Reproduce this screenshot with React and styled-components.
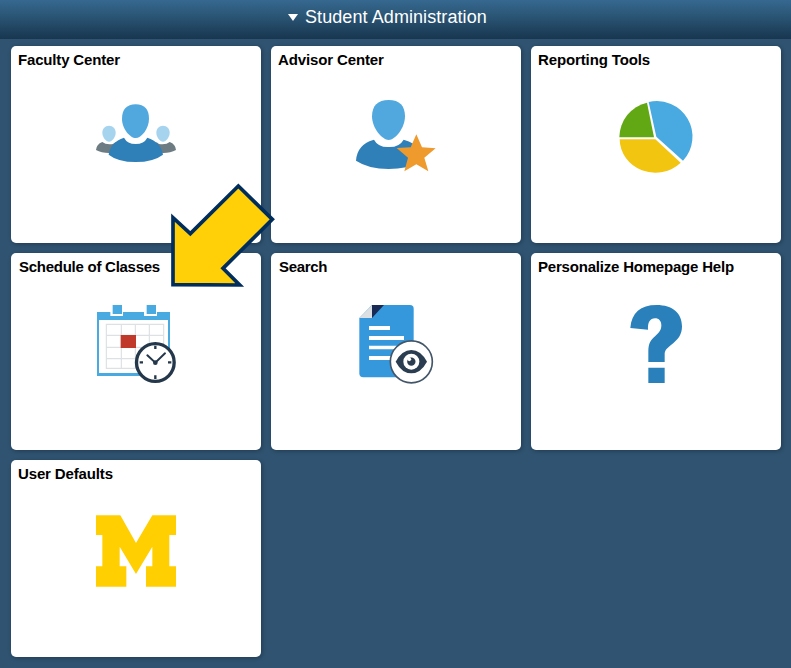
import React from 'react';
import styled, { createGlobalStyle } from 'styled-components';

const GlobalStyle = createGlobalStyle`
  * { box-sizing: border-box; }
  body {
    margin: 0;
    background: #2f5371;
    font-family: "Liberation Sans", Arial, sans-serif;
  }
`;

const Page = styled.div`
  position: relative;
  width: 791px;
  height: 668px;
  overflow: hidden;
  background: #2f5371;
`;

const Header = styled.header`
  height: 39px;
  padding: 0 0 5px 288px;
  display: flex;
  align-items: center;
  gap: 7px;
  background: linear-gradient(#366890, #2b5676 40%, #18364f);
`;

const Caret = styled.span`
  width: 0;
  height: 0;
  margin-top: 1px;
  border-left: 5px solid transparent;
  border-right: 5px solid transparent;
  border-top: 7px solid #fff;
`;

const HeaderTitle = styled.h1`
  margin: 0;
  font-size: 18px;
  line-height: 20px;
  font-weight: 400;
  letter-spacing: 0.08px;
  color: #fff;
  white-space: nowrap;
`;

const Grid = styled.main`
  display: grid;
  grid-template-columns: repeat(3, 250px);
  grid-auto-rows: 197px;
  gap: 10px;
  padding: 7px 10px 11px 11px;
`;

const Tile = styled.section`
  display: flex;
  flex-direction: column;
  align-items: center;
  background: #fff;
  border-radius: 5px;
  box-shadow: 1px 1px 4px rgba(0, 0, 0, 0.3);
`;

const TileTitle = styled.h2`
  align-self: stretch;
  height: 44px;
  margin: 0;
  padding: 5px 0 0 ${(p) => p.$indent}px;
  font-size: 15px;
  line-height: 18px;
  font-weight: 700;
  letter-spacing: ${(p) => p.$tracking}px;
  color: #000;
  white-space: nowrap;
`;

const Icon = styled.svg`
  display: block;
  width: 100px;
  height: 100px;
`;

const Arrow = styled.svg`
  position: absolute;
  left: 160px;
  top: 175px;
  width: 125px;
  height: 120px;
`;

const FacultyIcon = () => (
  <Icon viewBox="3 -15 300 300">
    <g fill="#a6d4ef">
      <path d="M72 92c12 0 20 9 20 21 0 13-11 27-20 27s-20-14-20-27c0-12 8-21 20-21z" />
      <path d="M234 92c12 0 20 9 20 21 0 13-11 27-20 27s-20-14-20-27c0-12 8-21 20-21z" />
    </g>
    <path fill="#6d7b82" d="M52 141q10 9 32 6l8-6v27l-20 6q-23 0-39-9 1-17 19-24zM254 141q-10 9-32 6l-8-6v27l20 6q23 0 39-9-1-17-19-24z" />
    <path fill="#2f7fb9" d="M117 128q10 19 35 19t35-19q41 13 47 51-29 22-82 22t-81-22q5-38 46-51z" />
    <path fill="#51a8de" d="M152 28c27 0 40 16 40 43 0 30-23 58-40 58s-41-28-41-58c0-27 14-43 41-43z" />
  </Icon>
);

const AdvisorIcon = () => (
  <Icon viewBox="3 0 300 300">
    <path fill="#2f7fb9" d="M87 149q12 23 44 22 32 1 45-22 16 4 30 13l6 56-29 14q-24 5-52 5-60 0-98-25 3-49 54-63z" />
    <path fill="#51a8de" d="M131 30c33 0 49 18 49 49 0 35-29 71-49 71s-50-36-50-71c0-31 17-49 50-49z" />
    <path fill="#ef9a2c" d="M214 133l17 39 41 3-34 28 12 41-36-21-36 21 11-41-34-29 42-2z" />
  </Icon>
);

const ReportingIcon = () => (
  <Icon viewBox="-12 0 300 300">
    <path fill="#48aae1" d="M139 140L116 36A107 106.5 0 0 1 219 212Z" />
    <path fill="#f2c511" d="M136 148L212 218A107 101 0 0 1 29 148Z" />
    <path fill="#62a814" d="M132 142L111 38A106 108 0 0 0 28 142Z" />
  </Icon>
);

const ScheduleIcon = () => (
  <Icon viewBox="3 6 300 300">
    <path fill="#48aae1" d="M36 51h219v192H36z" />
    <path fill="#fff" d="M42 75h207v159H42zM76 28h38v35H76zM177 28h39v35h-39z" />
    <path fill="#48aae1" d="M83 30h28v27H83zM185 30h28v27h-28z" />
    <path fill="none" stroke="#dde1e3" strokeWidth="3.5" d="M64 88h172v132H64zM109 88v132M151 88v132M193 88v132M64 121h172M64 157h172M64 191h172" />
    <path fill="#c1392b" d="M107 120h46v39h-46z" />
    <circle cx="211" cy="202.5" r="56.5" fill="#fff" stroke="#24374b" strokeWidth="10" />
    <path fill="none" stroke="#24374b" strokeWidth="6" strokeLinecap="round" d="M187 181l24 22 29-28" />
    <path fill="none" stroke="#24374b" strokeWidth="7" d="M211 152v10M211 241v11M164 202h10M249 202h10" />
    <circle cx="211" cy="203" r="7" fill="#24374b" />
  </Icon>
);

const SearchIcon = () => (
  <Icon viewBox="-12 6 300 300">
    <path fill="#3598dc" d="M66 30h114q11 0 11 11v194q0 12-11 12H40q-12 0-12-12V69z" />
    <path fill="#dde0e3" d="M66 31v38H28z" />
    <path fill="#192a54" d="M66 30h36L66 69z" />
    <path fill="#fff" d="M57 93h63v12H57zM57 123h105v12H57zM57 152h83v11H57zM57 183h67v12H57z" />
    <circle cx="184" cy="200.5" r="63" fill="#fff" stroke="#435669" strokeWidth="5" />
    <path fill="#2b3d50" d="M137 200q19-35 47-35t47 35q-19 35-47 35t-47-35z" />
    <circle cx="184" cy="200" r="24" fill="#fff" />
    <circle cx="184" cy="200" r="12.5" fill="#2b3d50" />
    <circle cx="178" cy="193" r="5.5" fill="#fff" />
  </Icon>
);

const HelpIcon = () => (
  <Icon viewBox="-42 6 300 300">
    <path fill="#2980bb" d="M31 99C35 53 61 30 110 30c48 0 76 25 76 64 0 26-12 40-34 57-15 12-18 17-18 29v21H85v-31c0-25 7-35 21-47 13-11 18-19 18-32 0-13-7-21-19-21-15 0-22 12-21 34zM85 218h49v46H85z" />
  </Icon>
);

const BlockMIcon = () => (
  <Icon viewBox="3 -3 300 300">
    <path fill="#ffcf01" d="M33 31h73l47 83 49-83h71v59h-20v94h20v61h-90v-61h19v-59l-49 82-49-82v59h20v61H33v-61h19V90H33z" />
  </Icon>
);

const tiles = [
  { title: 'Faculty Center', icon: FacultyIcon, indent: 7, tracking: -0.17 },
  { title: 'Advisor Center', icon: AdvisorIcon, indent: 7, tracking: -0.13 },
  { title: 'Reporting Tools', icon: ReportingIcon, indent: 7, tracking: -0.12 },
  { title: 'Schedule of Classes', icon: ScheduleIcon, indent: 8, tracking: -0.26 },
  { title: 'Search', icon: SearchIcon, indent: 8, tracking: -0.3 },
  { title: 'Personalize Homepage Help', icon: HelpIcon, indent: 7, tracking: -0.2 },
  { title: 'User Defaults', icon: BlockMIcon, indent: 7, tracking: -0.14 },
];

export default function App() {
  return (
    <Page>
      <GlobalStyle />
      <Header>
        <Caret />
        <HeaderTitle>Student Administration</HeaderTitle>
      </Header>
      <Grid>
        {tiles.map(({ title, icon: TileIcon, indent, tracking }) => (
          <Tile key={title}>
            <TileTitle $indent={indent} $tracking={tracking}>{title}</TileTitle>
            <TileIcon />
          </Tile>
        ))}
      </Grid>
      <Arrow viewBox="0 0 375 360">
        <path fill="#ffcf08" stroke="#012d5d" strokeWidth="11" d="M235 33L337 133 189 280 239 330 39 329V128L91 176Z" />
      </Arrow>
    </Page>
  );
}
